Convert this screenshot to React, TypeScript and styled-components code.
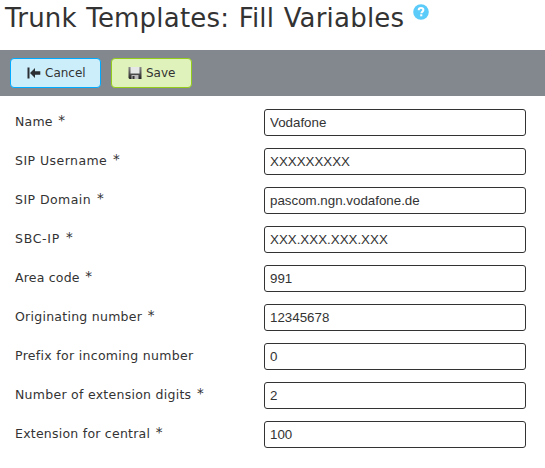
import React from "react";
import styled, { createGlobalStyle } from "styled-components";

const Global = createGlobalStyle`
  * { box-sizing: border-box; }
  body { margin: 0; background: #fff; font-family: Verdana, "DejaVu Sans", sans-serif; color: #333; overflow: hidden; }
`;
const Header = styled.header`
  display: flex; align-items: flex-start; height: 50px; padding-left: 5px;
`;
const Title = styled.h1`
  width: 400px; margin: 2px 0 0; font-size: 26px; line-height: 32px; font-weight: 400;
  letter-spacing: 0.2px; word-spacing: 1px; white-space: nowrap;
`;
const Help = styled.svg`
  width: 16px; height: 16px; margin: 4px 0 0 8px; flex: none;
`;
const Toolbar = styled.div`
  display: flex; gap: 10px; height: 46px; padding: 8px 10px; background: #82888e;
`;
const Button = styled.button<{ $tone: "blue" | "green" }>`
  display: flex; align-items: center; height: 30px; gap: 4px; padding: 0 0 0 16px;
  width: ${p => (p.$tone === "blue" ? 91 : 81)}px;
  border: 1px solid ${p => (p.$tone === "blue" ? "#00aaff" : "#94cc1c")};
  background: ${p => (p.$tone === "blue" ? "#cceefb" : "#e0f2bb")};
  border-radius: 4px; font: 12px/16px Verdana, "DejaVu Sans", sans-serif; color: #333;
`;
const ButtonIcon = styled.svg`
  width: 14px; height: 14px; flex: none;
`;
const Form = styled.form`
  display: grid; row-gap: 12px; padding: 13px 0 0 15px;
`;
const Row = styled.label`
  display: grid; grid-template-columns: 249px 262px; height: 27px;
`;
const Label = styled.span<{ $tracking: number }>`
  font-size: 12.5px; line-height: 25px; white-space: nowrap; letter-spacing: ${p => p.$tracking}px;
`;
const Required = styled.span`
  margin-left: 1px; font-size: 13.5px; line-height: 1; vertical-align: 1px;
`;
const Input = styled.input`
  height: 27px; padding: 0 5px 1px; border: 1px solid #333; border-radius: 3px;
  font: 13.333px "Liberation Sans", Arial, sans-serif; color: #333; background: #fff;
`;

type Field = { label: string; value: string; required: boolean; tracking: number };

const fields: Field[] = [
  { label: "Name", value: "Vodafone", required: true, tracking: 0.2 },
  { label: "SIP Username", value: "XXXXXXXXX", required: true, tracking: 0.45 },
  { label: "SIP Domain", value: "pascom.ngn.vodafone.de", required: true, tracking: 0.45 },
  { label: "SBC-IP", value: "XXX.XXX.XXX.XXX", required: true, tracking: 0.7 },
  { label: "Area code", value: "991", required: true, tracking: 0.2 },
  { label: "Originating number", value: "12345678", required: true, tracking: 0.26 },
  { label: "Prefix for incoming number", value: "0", required: false, tracking: 0.31 },
  { label: "Number of extension digits", value: "2", required: true, tracking: 0.27 },
  { label: "Extension for central", value: "100", required: true, tracking: 0.24 },
];

function HelpIcon() {
  return (
    <Help viewBox="0 0 16 16">
      <circle cx="8" cy="8" r="7.8" fill="#5bcbfa" />
      <path d="M5.7 6.3C5.7 4.7 6.7 4 8 4s2.4.8 2.4 2.1c0 1.5-2 1.6-2 3.1" fill="none" stroke="#fff" strokeWidth="2" />
      <rect x="7.2" y="10.3" width="2.1" height="2" fill="#fff" />
    </Help>
  );
}

function BackIcon() {
  return (
    <ButtonIcon viewBox="0 0 14 14">
      <path d="M0.5 1.5h2v11h-2zM3 7l5-5v3.2h5.3v3.6H8V12z" fill="#2b2f33" />
    </ButtonIcon>
  );
}

function SaveIcon() {
  return (
    <ButtonIcon viewBox="0 0 14 14">
      <defs>
        <linearGradient id="disk" x1="0" y1="0" x2="0" y2="1">
          <stop offset="0" stopColor="#888" />
          <stop offset="1" stopColor="#222" />
        </linearGradient>
      </defs>
      <path d="M0.5 1h13v12h-12l-1-1z" fill="url(#disk)" />
      <path d="M2.5 1h9v6.5h-9z" fill="#e6e8e8" />
      <path d="M3.5 9h7v4h-7z" fill="#bbb" />
      <path d="M4.5 10h2v3h-2z" fill="#333" />
    </ButtonIcon>
  );
}

export default function App() {
  return (
    <>
      <Global />
      <Header>
        <Title>Trunk Templates: Fill Variables</Title>
        <HelpIcon />
      </Header>
      <Toolbar>
        <Button $tone="blue"><BackIcon />Cancel</Button>
        <Button $tone="green"><SaveIcon />Save</Button>
      </Toolbar>
      <Form>
        {fields.map(f => (
          <Row key={f.label}>
            <Label $tracking={f.tracking}>{f.label}{f.required && <Required> *</Required>}</Label>
            <Input defaultValue={f.value} />
          </Row>
        ))}
      </Form>
    </>
  );
}
